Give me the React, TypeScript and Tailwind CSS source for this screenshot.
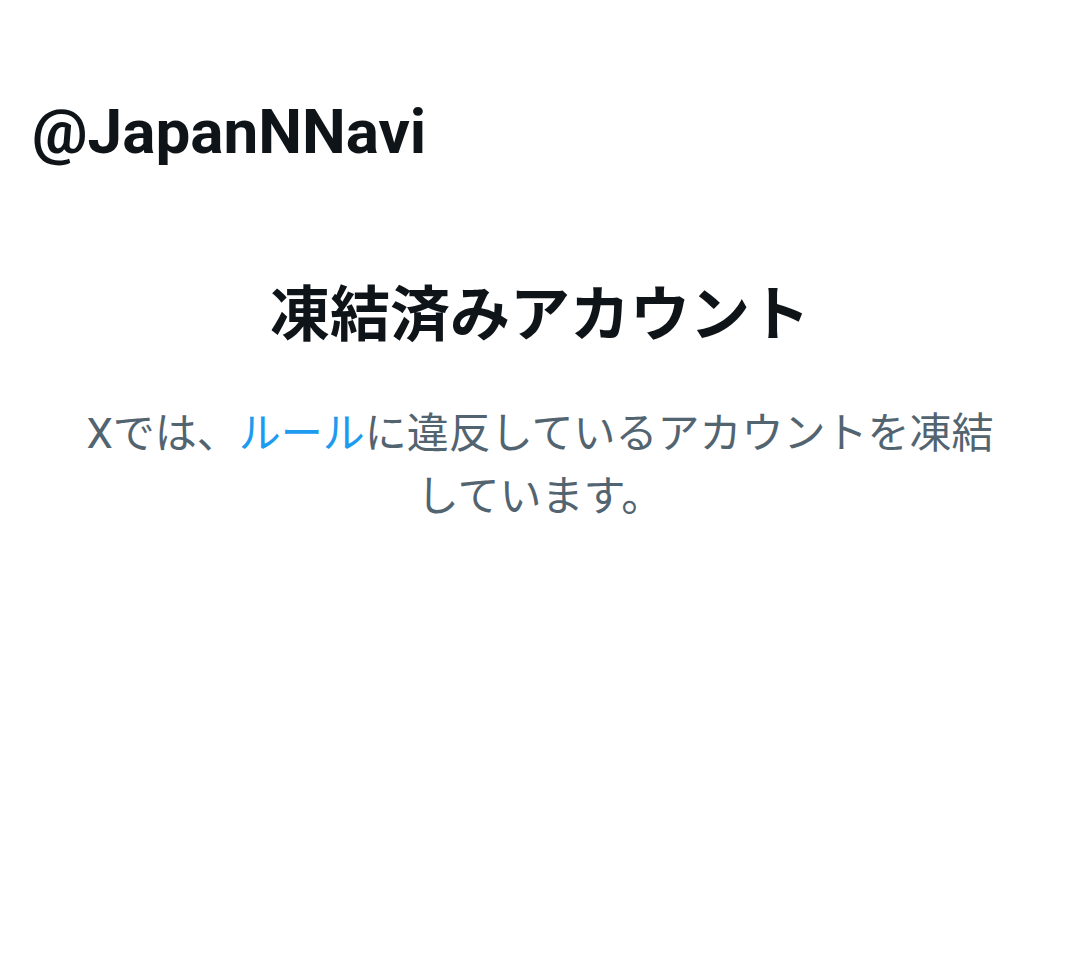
export default function App() {
  return (
    <div className="w-[1080px] h-[974px] bg-white flex flex-col">
      <div
        className="pt-[88px] pl-[32px] text-[62px] leading-[88px] font-bold text-[#0f1419]"
        style={{ fontFamily: "Roboto, 'Noto Sans CJK JP', sans-serif" }}
      >
        @JapanNNavi
      </div>
      <div
        className="mt-[100px] flex flex-col items-center px-[80px]"
        style={{ fontFamily: "Roboto, 'Noto Sans CJK JP', sans-serif" }}
      >
        <h1 className="text-[60px] leading-[80px] font-bold text-[#0f1419]">
          凍結済みアカウント
        </h1>
        <p className="mt-[46px] text-[42px] leading-[63px] text-[#536471] text-center">
          Xでは、<span className="text-[#1d9bf0]">ルール</span>に違反しているアカウントを凍結しています。
        </p>
      </div>
    </div>
  );
}
